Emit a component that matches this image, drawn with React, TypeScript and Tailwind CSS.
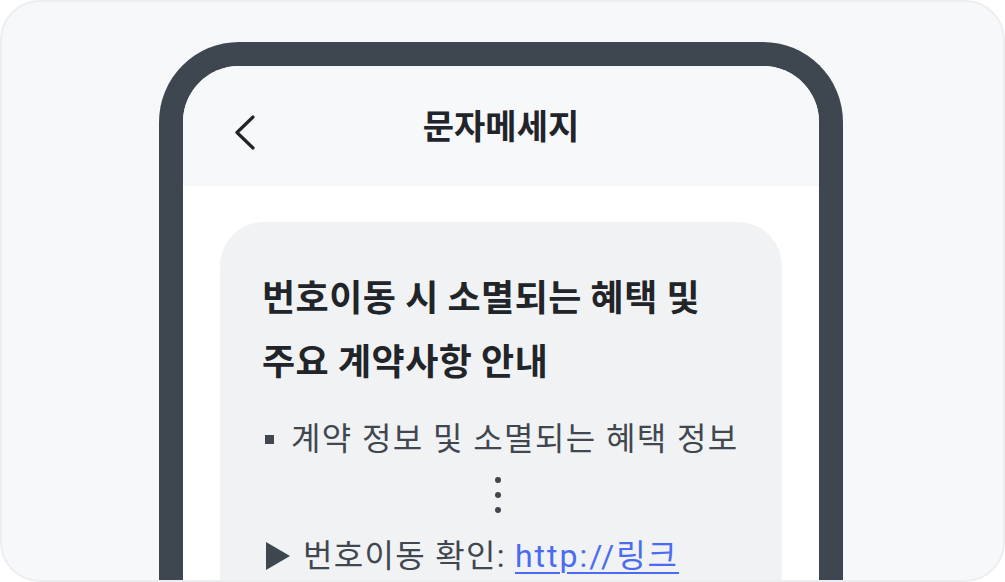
const font = { fontFamily: '"Noto Sans CJK KR", "Noto Sans", sans-serif' };
const bodyFont = { fontFamily: 'Roboto, "Noto Sans CJK KR", sans-serif' };

export default function App() {
  return (
    <div className="w-[1005px] h-[582px] bg-white" style={font}>
      <div className="h-full w-full rounded-[40px] border-2 border-[#eceef1] bg-[#f7f8fa] overflow-hidden flex pt-[40px] pl-[157px]">
        {/* phone frame */}
        <div className="w-[684px] h-[620px] shrink-0 rounded-t-[80px] border-[24px] border-b-0 border-[#3e4650] bg-white overflow-hidden flex flex-col">
          <div className="relative h-[120px] shrink-0 bg-[#f7f8fa] flex items-center justify-center">
            <svg
              width="24"
              height="36"
              viewBox="0 0 24 36"
              className="absolute left-[50px] top-[48px]"
              fill="none"
              stroke="#212529"
              strokeWidth="3.2"
              strokeLinecap="round"
              strokeLinejoin="round"
            >
              <path d="M20 3 L4 18.5 L20 34" />
            </svg>
            <h1 className="text-[34px] font-bold text-[#212529] leading-none -mt-[2px]">문자메세지</h1>
          </div>

          <div className="flex-1 bg-white px-[37px] pt-[36px]" style={bodyFont}>
            <div className="rounded-[44px] bg-[#f1f2f4] pl-[42px] pr-[30px] pt-[41px] pb-10">
              <h2 className="text-[36px] leading-[64px] font-bold text-[#212529] tracking-[0.5px]" style={font}>
                번호이동 시 소멸되는 혜택 및
                <br />
                주요 계약사항 안내
              </h2>
              <p className="mt-[26px] flex items-center text-[32px] leading-[44px] text-[#41474f] tracking-[1.4px] whitespace-nowrap">
                <span className="ml-[3px] mr-[17px] inline-block h-[9px] w-[9px] bg-[#41474f]" />
                계약 정보 및 소멸되는 혜택 정보
              </p>
              <div className="mt-[16px] flex flex-col items-center gap-[9px] pr-[18px]">
                <span className="h-[6px] w-[6px] rounded-full bg-[#41474f]" />
                <span className="h-[6px] w-[6px] rounded-full bg-[#41474f]" />
                <span className="h-[6px] w-[6px] rounded-full bg-[#41474f]" />
              </div>
              <p className="mt-[21px] flex items-center text-[32px] leading-[44px] text-[#41474f] tracking-[1.3px] whitespace-nowrap">
                <svg width="26" height="28" viewBox="0 0 26 28" className="ml-[3px] mr-[12px]">
                  <path d="M1 0 L25 14 L1 28 Z" fill="#3e4650" />
                </svg>
                번호이동 확인:&nbsp;
                <a href="#" className="text-[#4a6cf2] underline underline-offset-[5px] decoration-2 tracking-[2px]">
                  http://링크
                </a>
              </p>
            </div>
          </div>
        </div>
      </div>
    </div>
  );
}
